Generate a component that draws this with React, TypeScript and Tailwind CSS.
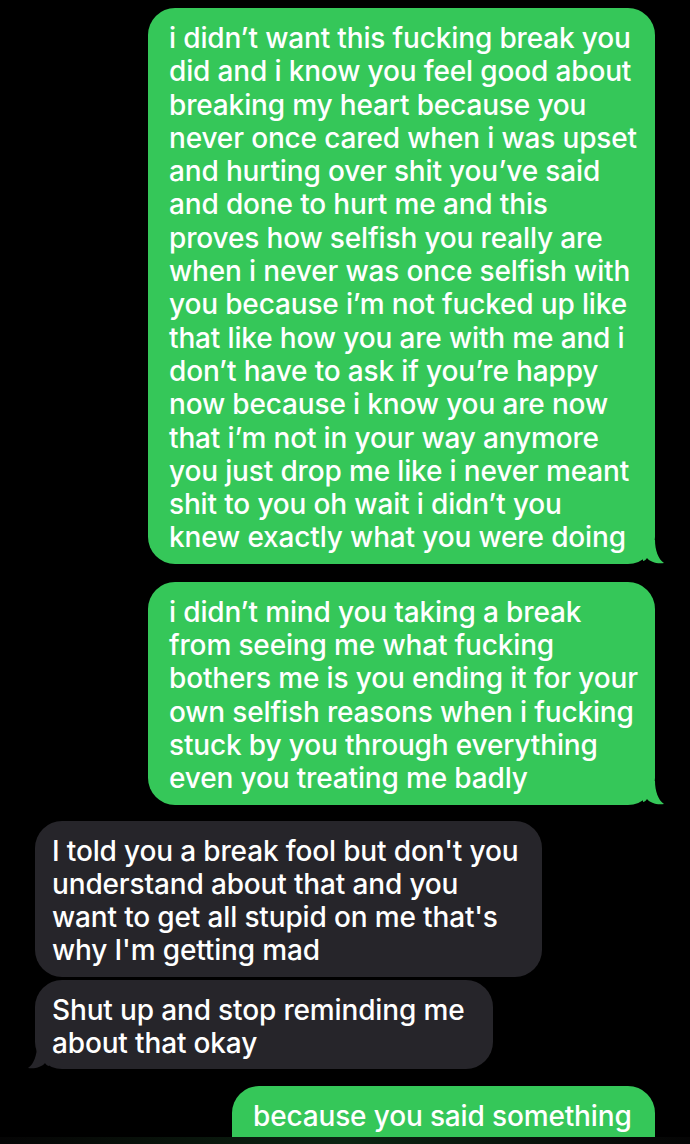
import React from "react";

const GREEN = "#35c759";
const GRAY = "#26252a";

type Msg = {
  from: "me" | "them";
  lines: string[];
  tail?: boolean;
  gap: string;
  width: string;
};

const messages: Msg[] = [
  {
    from: "me",
    tail: true,
    gap: "mt-[8px]",
    width: "w-[507px]",
    lines: [
      "i didn’t want this fucking break you",
      "did and i know you feel good about",
      "breaking my heart because you",
      "never once cared when i was upset",
      "and hurting over shit you’ve said",
      "and done to hurt me and this",
      "proves how selfish you really are",
      "when i never was once selfish with",
      "you because i’m not fucked up like",
      "that like how you are with me and i",
      "don’t have to ask if you’re happy",
      "now because i know you are now",
      "that i’m not in your way anymore",
      "you just drop me like i never meant",
      "shit to you oh wait i didn’t you",
      "knew exactly what you were doing",
    ],
  },
  {
    from: "me",
    tail: true,
    gap: "mt-[18px]",
    width: "w-[507px]",
    lines: [
      "i didn’t mind you taking a break",
      "from seeing me what fucking",
      "bothers me is you ending it for your",
      "own selfish reasons when i fucking",
      "stuck by you through everything",
      "even you treating me badly",
    ],
  },
  {
    from: "them",
    gap: "mt-[16px]",
    width: "w-[507px]",
    lines: [
      "I told you a break fool but don't you",
      "understand about that and you",
      "want to get all stupid on me that's",
      "why I'm getting mad",
    ],
  },
  {
    from: "them",
    tail: true,
    gap: "mt-[3px]",
    width: "w-[458px]",
    lines: ["Shut up and stop reminding me", "about that okay"],
  },
  {
    from: "me",
    gap: "mt-[17px]",
    width: "w-[423px]",
    lines: ["because you said something"],
  },
];

function Tail({ side }: { side: "left" | "right" }) {
  if (side === "right") {
    return (
      <svg
        className="absolute -right-[10px] bottom-0"
        width="22"
        height="24"
        viewBox="0 0 22 24"
      >
        <path
          d="M0 0 H12 C12 10 15 19 21 23 C14 24 7 22 4 18 C3 20 1 21 0 21 Z"
          fill={GREEN}
        />
      </svg>
    );
  }
  return (
    <svg
      className="absolute -left-[8px] bottom-0"
      width="22"
      height="24"
      viewBox="0 0 22 24"
    >
      <path
        d="M22 0 H10 C10 10 7 19 1 23 C8 24 15 22 18 18 C19 20 21 21 22 21 Z"
        fill={GRAY}
      />
    </svg>
  );
}

function Bubble({ msg, last }: { msg: Msg; last?: boolean }) {
  const mine = msg.from === "me";
  return (
    <div className={`flex ${mine ? "justify-end pr-[35px]" : "justify-start pl-[35px]"} ${msg.gap}`}>
      <div
        className={`relative rounded-[27px] pt-[14px] ${last ? "pb-[40px]" : "pb-[9px]"} ${msg.width} ${
          mine ? "bg-[#35c759] pl-[21px]" : "bg-[#26252a] pl-[17px]"
        }`}
      >
        {msg.lines.map((l, i) => (
          <div
            key={i}
            className="relative z-10 whitespace-nowrap text-[28px] font-medium leading-[33.3px] tracking-[-0.15px] text-white"
          >
            {l}
          </div>
        ))}
        {msg.tail && <Tail side={mine ? "right" : "left"} />}
      </div>
    </div>
  );
}

export default function App() {
  return (
    <div
      className="relative h-[1144px] w-[690px] overflow-hidden bg-black"
      style={{ fontFamily: "Inter, 'Liberation Sans', sans-serif" }}
    >
      <div className="flex flex-col">
        {messages.map((m, i) => (
          <Bubble key={i} msg={m} last={i === messages.length - 1} />
        ))}
      </div>
      {/* blurred strip at the bottom edge */}
      <div className="absolute bottom-0 left-0 h-[7px] w-full bg-gradient-to-r from-[#050505] via-[#0b2412] to-[#050505]" />
    </div>
  );
}
